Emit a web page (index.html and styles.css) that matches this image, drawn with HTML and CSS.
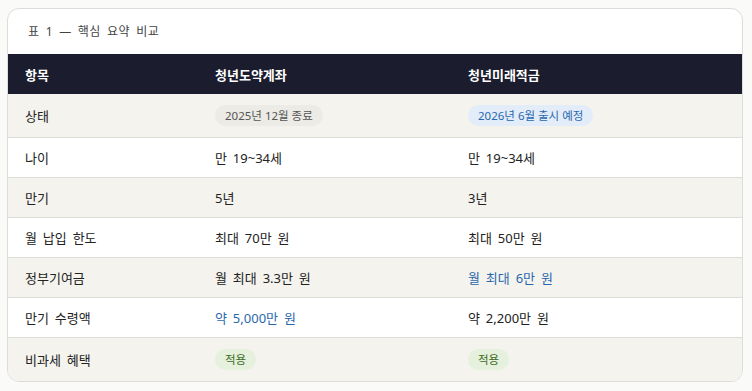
FILE: index.html
```html
<!DOCTYPE html>
<html lang="ko">
<head>
<meta charset="utf-8">
<link rel="stylesheet" href="styles.css">
</head>
<body>
<div class="card">
  <div class="caption">표 1 — 핵심 요약 비교</div>
  <table class="cmp">
    <colgroup><col class="c1"><col class="c2"><col class="c3"></colgroup>
    <thead>
      <tr><th>항목</th><th>청년도약계좌</th><th>청년미래적금</th></tr>
    </thead>
    <tbody>
      <tr class="alt"><td>상태</td><td><span class="pill gray">2025년 12월 종료</span></td><td><span class="pill blue">2026년 6월 출시 예정</span></td></tr>
      <tr><td>나이</td><td>만 19~34세</td><td>만 19~34세</td></tr>
      <tr class="alt"><td>만기</td><td>5년</td><td>3년</td></tr>
      <tr><td>월 납입 한도</td><td>최대 70만 원</td><td>최대 50만 원</td></tr>
      <tr class="alt"><td>정부기여금</td><td>월 최대 3.3만 원</td><td class="hl">월 최대 6만 원</td></tr>
      <tr><td>만기 수령액</td><td class="hl">약 5,000만 원</td><td>약 2,200만 원</td></tr>
      <tr class="alt last"><td>비과세 혜택</td><td><span class="pill green">적용</span></td><td><span class="pill green">적용</span></td></tr>
    </tbody>
  </table>
</div>
</body>
</html>
```

FILE: styles.css
```css
html, body { background: #fafaf8; }
body {
  margin: 8px 9px 0 7px;
  font-family: "Noto Sans", "Noto Sans CJK KR", sans-serif;
  color: #222;
}
.card {
  background: #fff;
  border: 1px solid #dcdcd8;
  border-radius: 12px;
  overflow: hidden;
}
.caption {
  height: 45px;
  box-sizing: border-box;
  padding: 14px 0 0 20px;
  font-size: 12px;
  line-height: 18px;
  letter-spacing: 0.5px;
  word-spacing: 2.5px;
  color: #444;
}
.cmp {
  width: 100%;
  border-collapse: collapse;
  table-layout: fixed;
  font-size: 13px;
  word-spacing: 2.5px;
}
.c1 { width: 190px; }
.c2 { width: 253px; }
.cmp th {
  background: #1b1c2e;
  color: #fff;
  font-weight: 700;
  text-align: left;
  height: 40px;
  padding: 0 17px;
  font-size: 13px;
}
.cmp td {
  height: 39px;
  padding: 0 17px;
  border-top: 1px solid #dcdcd8;
  line-height: 18px;
}
.cmp tr.alt td { background: #f4f3ee; }
.cmp tbody tr:first-child td { height: 43px; border-top: none; }
.cmp tr.last td { height: 43px; }
.hl { color: #2a68ac; }
.pill {
  display: inline-block;
  font-size: 11.5px;
  line-height: 21px;
  padding: 0 10px;
  border-radius: 11px;
  word-spacing: 0;
}
.gray { background: #ecebe6; color: #555; }
.blue { background: #e2edf9; color: #2a68ac; }
.green { background: #e5f1dc; color: #3b6b1f; }
```
